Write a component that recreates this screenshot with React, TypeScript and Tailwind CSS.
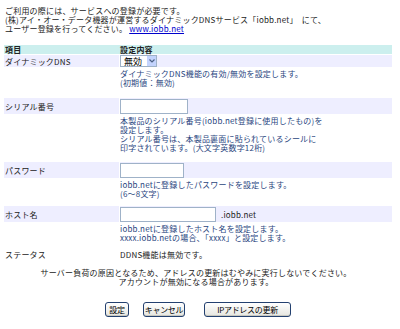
import React from "react";

const Band = ({ label, children }: { label: string; children: React.ReactNode }) => (
  <div className="grid grid-cols-[115px_1fr] gap-x-[1px] h-[16px]">
    <div className="bg-[#eeeeff] flex items-center pl-[1px]">{label}</div>
    <div className="bg-[#eeeeff] flex items-center">{children}</div>
  </div>
);

const Desc = ({ h, lines }: { h: string; lines: React.ReactNode[] }) => (
  <div className={`grid grid-cols-[115px_1fr] gap-x-[1px] ${h}`}>
    <div />
    <div className="pt-[2px] text-[#2a4680]">
      {lines.map((l, i) => (
        <div key={i}>{l}</div>
      ))}
    </div>
  </div>
);

const Input = ({ w }: { w: string }) => (
  <div className={`${w} h-[15px] bg-white border border-[#9fb2c8]`} />
);

const Btn = ({ children, w }: { children: React.ReactNode; w: string }) => (
  <div
    className={`${w} h-[15px] rounded-[3px] border border-[#23406f] bg-gradient-to-b from-white to-[#e6e6e0] flex items-center justify-center text-[8px] leading-[10px] text-black tracking-[-0.3px] shadow-[inset_0_-1px_0_#c8c8c0] whitespace-nowrap`}
  >
    {children}
  </div>
);

export default function App() {
  return (
    <div className="w-[400px] h-[329px] bg-white font-['Noto_Sans_CJK_JP',sans-serif] text-[8px] leading-[9px] text-[#222] overflow-hidden tracking-[0.2px]">
      <div className="pl-[5px] pt-[6px]">
        <div>ご利用の際には、サービスへの登録が必要です。</div>
        <div>(株)アイ・オー・データ機器が運営するダイナミックDNSサービス「iobb.net」　にて、</div>
        <div>
          ユーザー登録を行ってください。 <span className="text-[#0000cc] underline">www.iobb.net</span>
        </div>
      </div>
      <div className="w-[388px] ml-[4px] mt-[12px]">
        <div className="grid grid-cols-[115px_1fr] h-[9px] bg-[#ccefee] font-bold text-[#222] items-center">
          <div className="pl-[1px]">項目</div>
          <div className="pl-[1px]">設定内容</div>
        </div>
        <div className="h-[1px]" />
        <div className="grid grid-cols-[115px_1fr] gap-x-[1px] h-[12px]">
          <div className="bg-[#eeeeff] flex items-center pl-[1px]">ダイナミックDNS</div>
          <div className="bg-[#eeeeff] flex items-center">
            <div className="w-[37px] h-[12px] bg-white border border-[#9fb2c8] flex items-center justify-between">
              <span className="pl-[3px] text-[9px] text-black tracking-normal">無効</span>
              <span className="w-[9px] h-[10px] bg-[#c3d3fd] flex items-center justify-center">
                <svg width="6" height="4" viewBox="0 0 6 4">
                  <path d="M0.5 0.5 L3 3 L5.5 0.5" stroke="#4d6185" strokeWidth="1.2" fill="none" />
                </svg>
              </span>
            </div>
          </div>
        </div>
        <Desc
          h="h-[31px]"
          lines={["ダイナミックDNS機能の有効/無効を設定します。", "(初期値：無効)"]}
        />
        <Band label="シリアル番号">
          <Input w="w-[68px]" />
        </Band>
        <Desc
          h="h-[48px]"
          lines={[
            "本製品のシリアル番号(iobb.net登録に使用したもの)を",
            "設定します。",
            "シリアル番号は、本製品裏面に貼られているシールに",
            "印字されています。(大文字英数字12桁)",
          ]}
        />
        <Band label="パスワード">
          <Input w="w-[64px]" />
        </Band>
        <Desc h="h-[28px]" lines={["iobb.netに登録したパスワードを設定します。", "(6〜8文字)"]} />
        <Band label="ホスト名">
          <Input w="w-[96px]" />
          <span className="ml-[5px]">.iobb.net</span>
        </Band>
        <Desc
          h="h-[27px]"
          lines={["iobb.netに登録したホスト名を設定します。", "xxxx.iobb.netの場合、「xxxx」と設定します。"]}
        />
        <div className="grid grid-cols-[115px_1fr] gap-x-[1px] h-[10px] items-center">
          <div className="pl-[1px]">ステータス</div>
          <div>DDNS機能は無効です。</div>
        </div>
      </div>
      <div className="mt-[9px] text-center w-[392px]">
        <div>サーバー負荷の原因となるため、アドレスの更新はむやみに実行しないでください。</div>
        <div>アカウントが無効になる場合があります。</div>
      </div>
      <div className="mt-[16px] flex pl-[105px]">
        <Btn w="w-[24px]">設定</Btn>
        <div className="w-[14px]" />
        <Btn w="w-[42px]">キャンセル</Btn>
        <div className="w-[19px]" />
        <Btn w="w-[87px]">IPアドレスの更新</Btn>
      </div>
    </div>
  );
}
